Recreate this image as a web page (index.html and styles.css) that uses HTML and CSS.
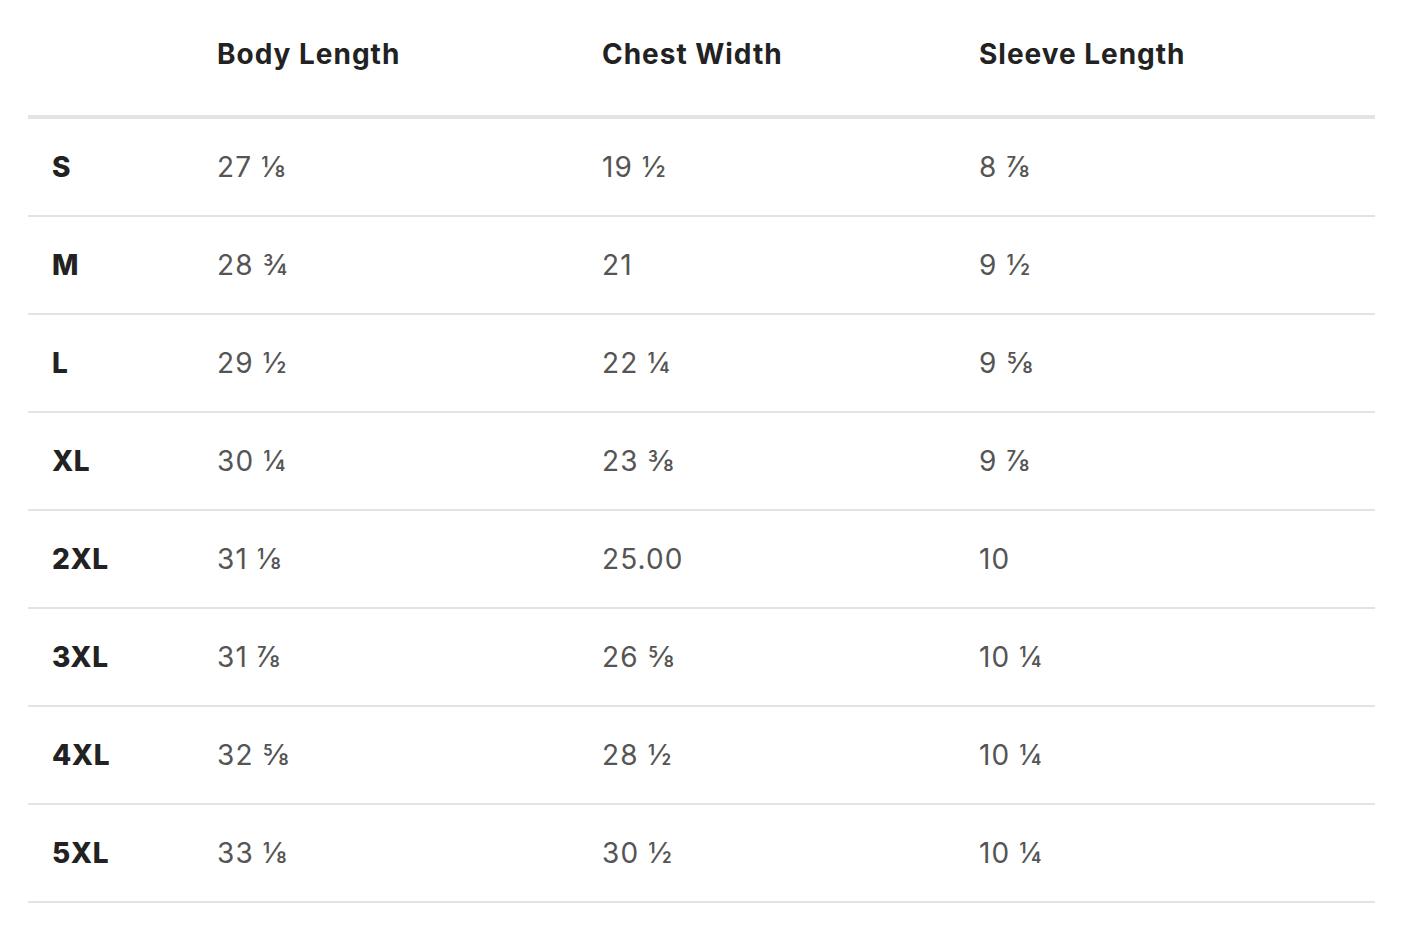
FILE: index.html
```html
<!DOCTYPE html>
<html lang="en">
<head>
<meta charset="utf-8">
<title>Size Chart</title>
<link rel="stylesheet" href="styles.css">
</head>
<body>
<div class="chart">
  <div class="row head">
    <div class="cell"></div>
    <div class="cell">Body Length</div>
    <div class="cell">Chest Width</div>
    <div class="cell">Sleeve Length</div>
  </div>
  <div class="row"><div class="cell size">S</div><div class="cell">27 ⅛</div><div class="cell">19 ½</div><div class="cell">8 ⅞</div></div>
  <div class="row"><div class="cell size">M</div><div class="cell">28 ¾</div><div class="cell">21</div><div class="cell">9 ½</div></div>
  <div class="row"><div class="cell size">L</div><div class="cell">29 ½</div><div class="cell">22 ¼</div><div class="cell">9 ⅝</div></div>
  <div class="row"><div class="cell size">XL</div><div class="cell">30 ¼</div><div class="cell">23 ⅜</div><div class="cell">9 ⅞</div></div>
  <div class="row"><div class="cell size">2XL</div><div class="cell">31 ⅛</div><div class="cell">25.00</div><div class="cell">10</div></div>
  <div class="row"><div class="cell size">3XL</div><div class="cell">31 ⅞</div><div class="cell">26 ⅝</div><div class="cell">10 ¼</div></div>
  <div class="row"><div class="cell size">4XL</div><div class="cell">32 ⅝</div><div class="cell">28 ½</div><div class="cell">10 ¼</div></div>
  <div class="row"><div class="cell size">5XL</div><div class="cell">33 ⅛</div><div class="cell">30 ½</div><div class="cell">10 ¼</div></div>
</div>
</body>
</html>
```
FILE: styles.css
```css
html, body {
  margin: 0;
  padding: 0;
  background: #ffffff;
}
body {
  font-family: "Inter", "Noto Sans", sans-serif;
  color: #555555;
}
.chart {
  width: 1347px;
  margin-left: 28px;
}
.row {
  display: grid;
  grid-template-columns: 165px 385px 377px 1fr;
  align-items: center;
  height: 96px;
  border-bottom: 2px solid #e3e3e3;
}
.row.head {
  height: 115px;
  border-bottom: 4px solid #e3e3e3;
  align-items: start;
}
.cell {
  padding-left: 24px;
  font-size: 28px;
  line-height: 34px;
  font-weight: 400;
  letter-spacing: 0.04em;
}
.head .cell {
  padding-top: 37px;
  font-weight: 700;
  color: #222222;
  letter-spacing: 0.035em;
}
.cell.size {
  font-weight: 800;
  color: #222222;
  letter-spacing: 0.02em;
}
```
